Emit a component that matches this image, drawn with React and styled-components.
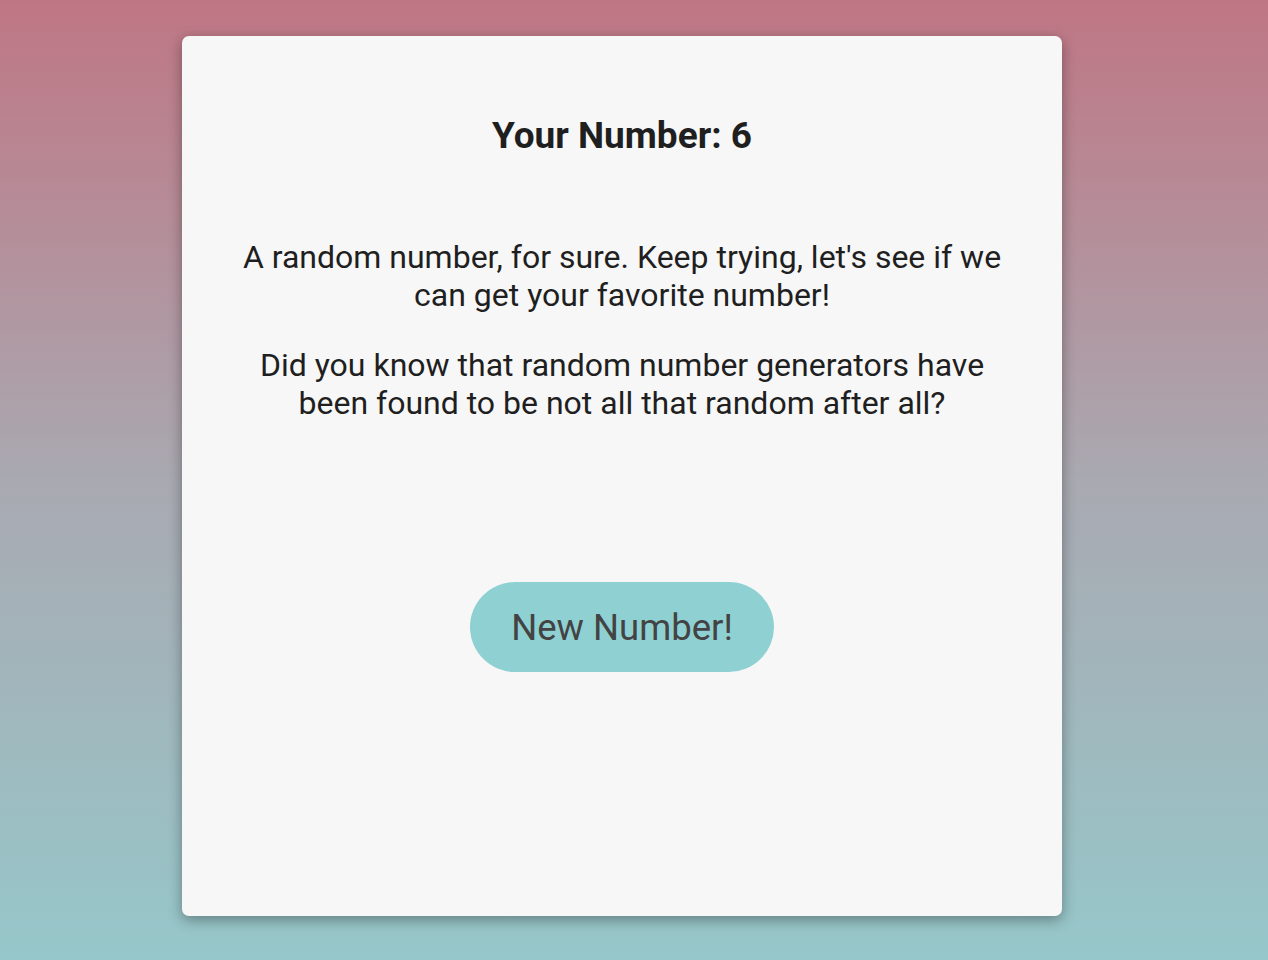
import React, { useState } from 'react'
import styled, { createGlobalStyle } from 'styled-components'

const GlobalStyle = createGlobalStyle`
	html, body {
		margin: 0;
		padding: 0;
		height: 100%;
	}
	body {
		font-family: Roboto, "Liberation Sans", sans-serif;
		background: linear-gradient(to bottom, #bf7684 0%, #a9a9b1 50%, #96c7ca 100%);
	}
`

const facts = [
	"A random number, for sure. Keep trying, let's see if we can get your favorite number!",
	'Did you know that random number generators have been found to be not all that random after all?'
]

const App = () => {
	const [number, setNumber] = useState(6)

	return (
		<Page>
			<GlobalStyle />
			<Card>
				<Title>Your Number: {number}</Title>
				<Body>
					{facts.map(text => (
						<Paragraph key={text}>{text}</Paragraph>
					))}
				</Body>
				<Button onClick={() => setNumber(Math.floor(Math.random() * 10) + 1)}>
					New Number!
				</Button>
			</Card>
		</Page>
	)
}

export default App

const Page = styled.div`
	min-height: 960px;
	box-sizing: border-box;
	padding: 36px 24px 0 0;
	display: flex;
	justify-content: center;
	align-items: flex-start;
`

const Card = styled.div`
	width: 880px;
	height: 880px;
	box-sizing: border-box;
	padding: 79px 50px 0;
	background: #f7f7f7;
	border-radius: 7px;
	box-shadow: 0 4px 14px rgba(0, 0, 0, 0.35);
	display: flex;
	flex-direction: column;
	align-items: center;
	text-align: center;
	color: #1f1f1f;
`

const Title = styled.h1`
	margin: 0;
	font-size: 37px;
	font-weight: 700;
	line-height: 42px;
`

const Body = styled.div`
	margin-top: 81px;
	display: flex;
	flex-direction: column;
	gap: 32px;
`

const Paragraph = styled.p`
	margin: 0;
	font-size: 32px;
	line-height: 38px;
`

const Button = styled.button`
	margin-top: 160px;
	width: 304px;
	height: 90px;
	border: none;
	border-radius: 45px;
	background: #8fd1d3;
	color: #434343;
	font-family: inherit;
	font-size: 36.5px;
	cursor: pointer;
`
